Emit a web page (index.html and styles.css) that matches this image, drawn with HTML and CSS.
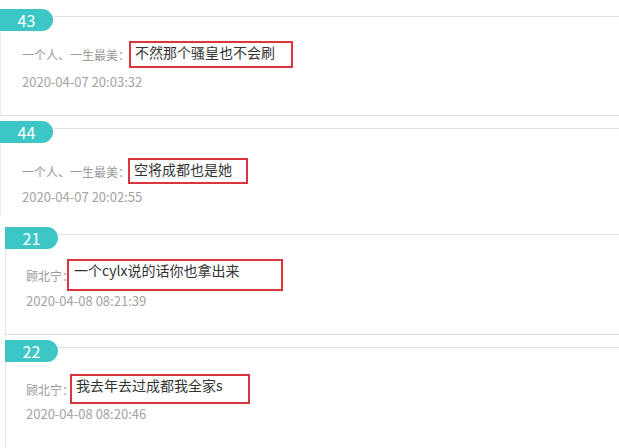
FILE: index.html
```html
<!DOCTYPE html>
<html lang="zh-CN">
  <head>
    <meta charset="UTF-8" />
    <meta name="viewport" content="width=device-width, initial-scale=1.0" />
    <title>评论列表</title>
    <link rel="stylesheet" href="styles.css">
  </head>
  <body>
    <div class="list">
      <div class="item item-a1">
        <div class="item-head">
          <span class="badge">43</span>
          <span class="rule"></span>
        </div>
        <div class="item-body">
          <div class="line">
            <span class="who">一个人、一生最美：</span>
            <span class="mark mark-a1">不然那个骚皇也不会刷</span>
          </div>
          <div class="time">2020-04-07 20:03:32</div>
        </div>
      </div>

      <div class="item item-a2">
        <div class="item-head">
          <span class="badge">44</span>
          <span class="rule"></span>
        </div>
        <div class="item-body">
          <div class="line">
            <span class="who">一个人、一生最美：</span>
            <span class="mark mark-a2">空将成都也是她</span>
          </div>
          <div class="time">2020-04-07 20:02:55</div>
        </div>
      </div>

      <div class="item item-b1">
        <div class="item-head">
          <span class="badge">21</span>
          <span class="rule"></span>
        </div>
        <div class="item-body">
          <div class="line">
            <span class="who">顾北宁：</span>
            <span class="mark mark-b1">一个cylx说的话你也拿出来</span>
          </div>
          <div class="time">2020-04-08 08:21:39</div>
        </div>
      </div>

      <div class="item item-b2">
        <div class="item-head">
          <span class="badge">22</span>
          <span class="rule"></span>
        </div>
        <div class="item-body">
          <div class="line">
            <span class="who">顾北宁：</span>
            <span class="mark mark-b2">我去年去过成都我全家s</span>
          </div>
          <div class="time">2020-04-08 08:20:46</div>
        </div>
      </div>
    </div>
  </body>
</html>
```

FILE: styles.css
```css
body {
  margin: 0;
  background-color: #fff;
  font-family: "Noto Sans CJK SC", "Microsoft YaHei", sans-serif;
  color: #333;
}
.list {
  padding-top: 9px;
}
.item-head {
  display: flex;
  align-items: flex-start;
}
.badge {
  width: 53px;
  height: 22px;
  line-height: 22px;
  text-align: center;
  background-color: #3cc7c6;
  color: #fff;
  font-size: 16px;
  border-radius: 0 11px 11px 0;
}
.rule {
  flex: 1;
  height: 1px;
  margin-top: 7px;
  background-color: #e3e3e3;
}
.item-body {
  border-left: 1px solid #ececec;
  border-bottom: 1px solid #dedede;
  padding-left: 21px;
}
.line {
  display: flex;
  align-items: center;
}
.who {
  font-size: 12px;
  color: #999;
  white-space: nowrap;
}
.mark {
  box-sizing: border-box;
  border: 2px solid #d9363e;
  padding: 0 4px;
  font-size: 14px;
  line-height: 19px;
  color: #333;
  white-space: nowrap;
}
.time {
  font-size: 13px;
  line-height: 18px;
  color: #a3a3a3;
}

/* top pair */
.item-a1 .item-body {
  padding-top: 10px;
  padding-bottom: 24px;
}
.item-a1 .time {
  margin-top: 5px;
}
.mark-a1 {
  width: 164px;
  height: 27px;
  margin-left: -1px;
}
.item-a2 {
  margin-top: 5px;
}
.item-a2 .item-body {
  padding-top: 15px;
  padding-bottom: 9px;
  border-bottom: none;
}
.item-a2 .time {
  margin-top: 4px;
}
.mark-a2 {
  width: 120px;
  height: 26px;
  margin-left: -2px;
}

/* bottom pair */
.item-b1,
.item-b2 {
  margin-left: 5px;
}
.item-b1 {
  margin-top: 12px;
}
.item-b1 .item-body,
.item-b2 .item-body {
  padding-left: 20px;
  border-left-color: #e3e3e3;
}
.item-b1 .item-body {
  padding-top: 10px;
  padding-bottom: 24px;
}
.item-b1 .time,
.item-b2 .time {
  margin-top: 1px;
}
.mark-b1 {
  width: 216px;
  height: 32px;
  margin-left: -7px;
  padding-left: 5px;
}
.item-b2 {
  margin-top: 5px;
}
.item-b2 .item-body {
  padding-top: 12px;
  padding-bottom: 26px;
}
.mark-b2 {
  width: 180px;
  height: 30px;
  margin-left: -4px;
}
```
